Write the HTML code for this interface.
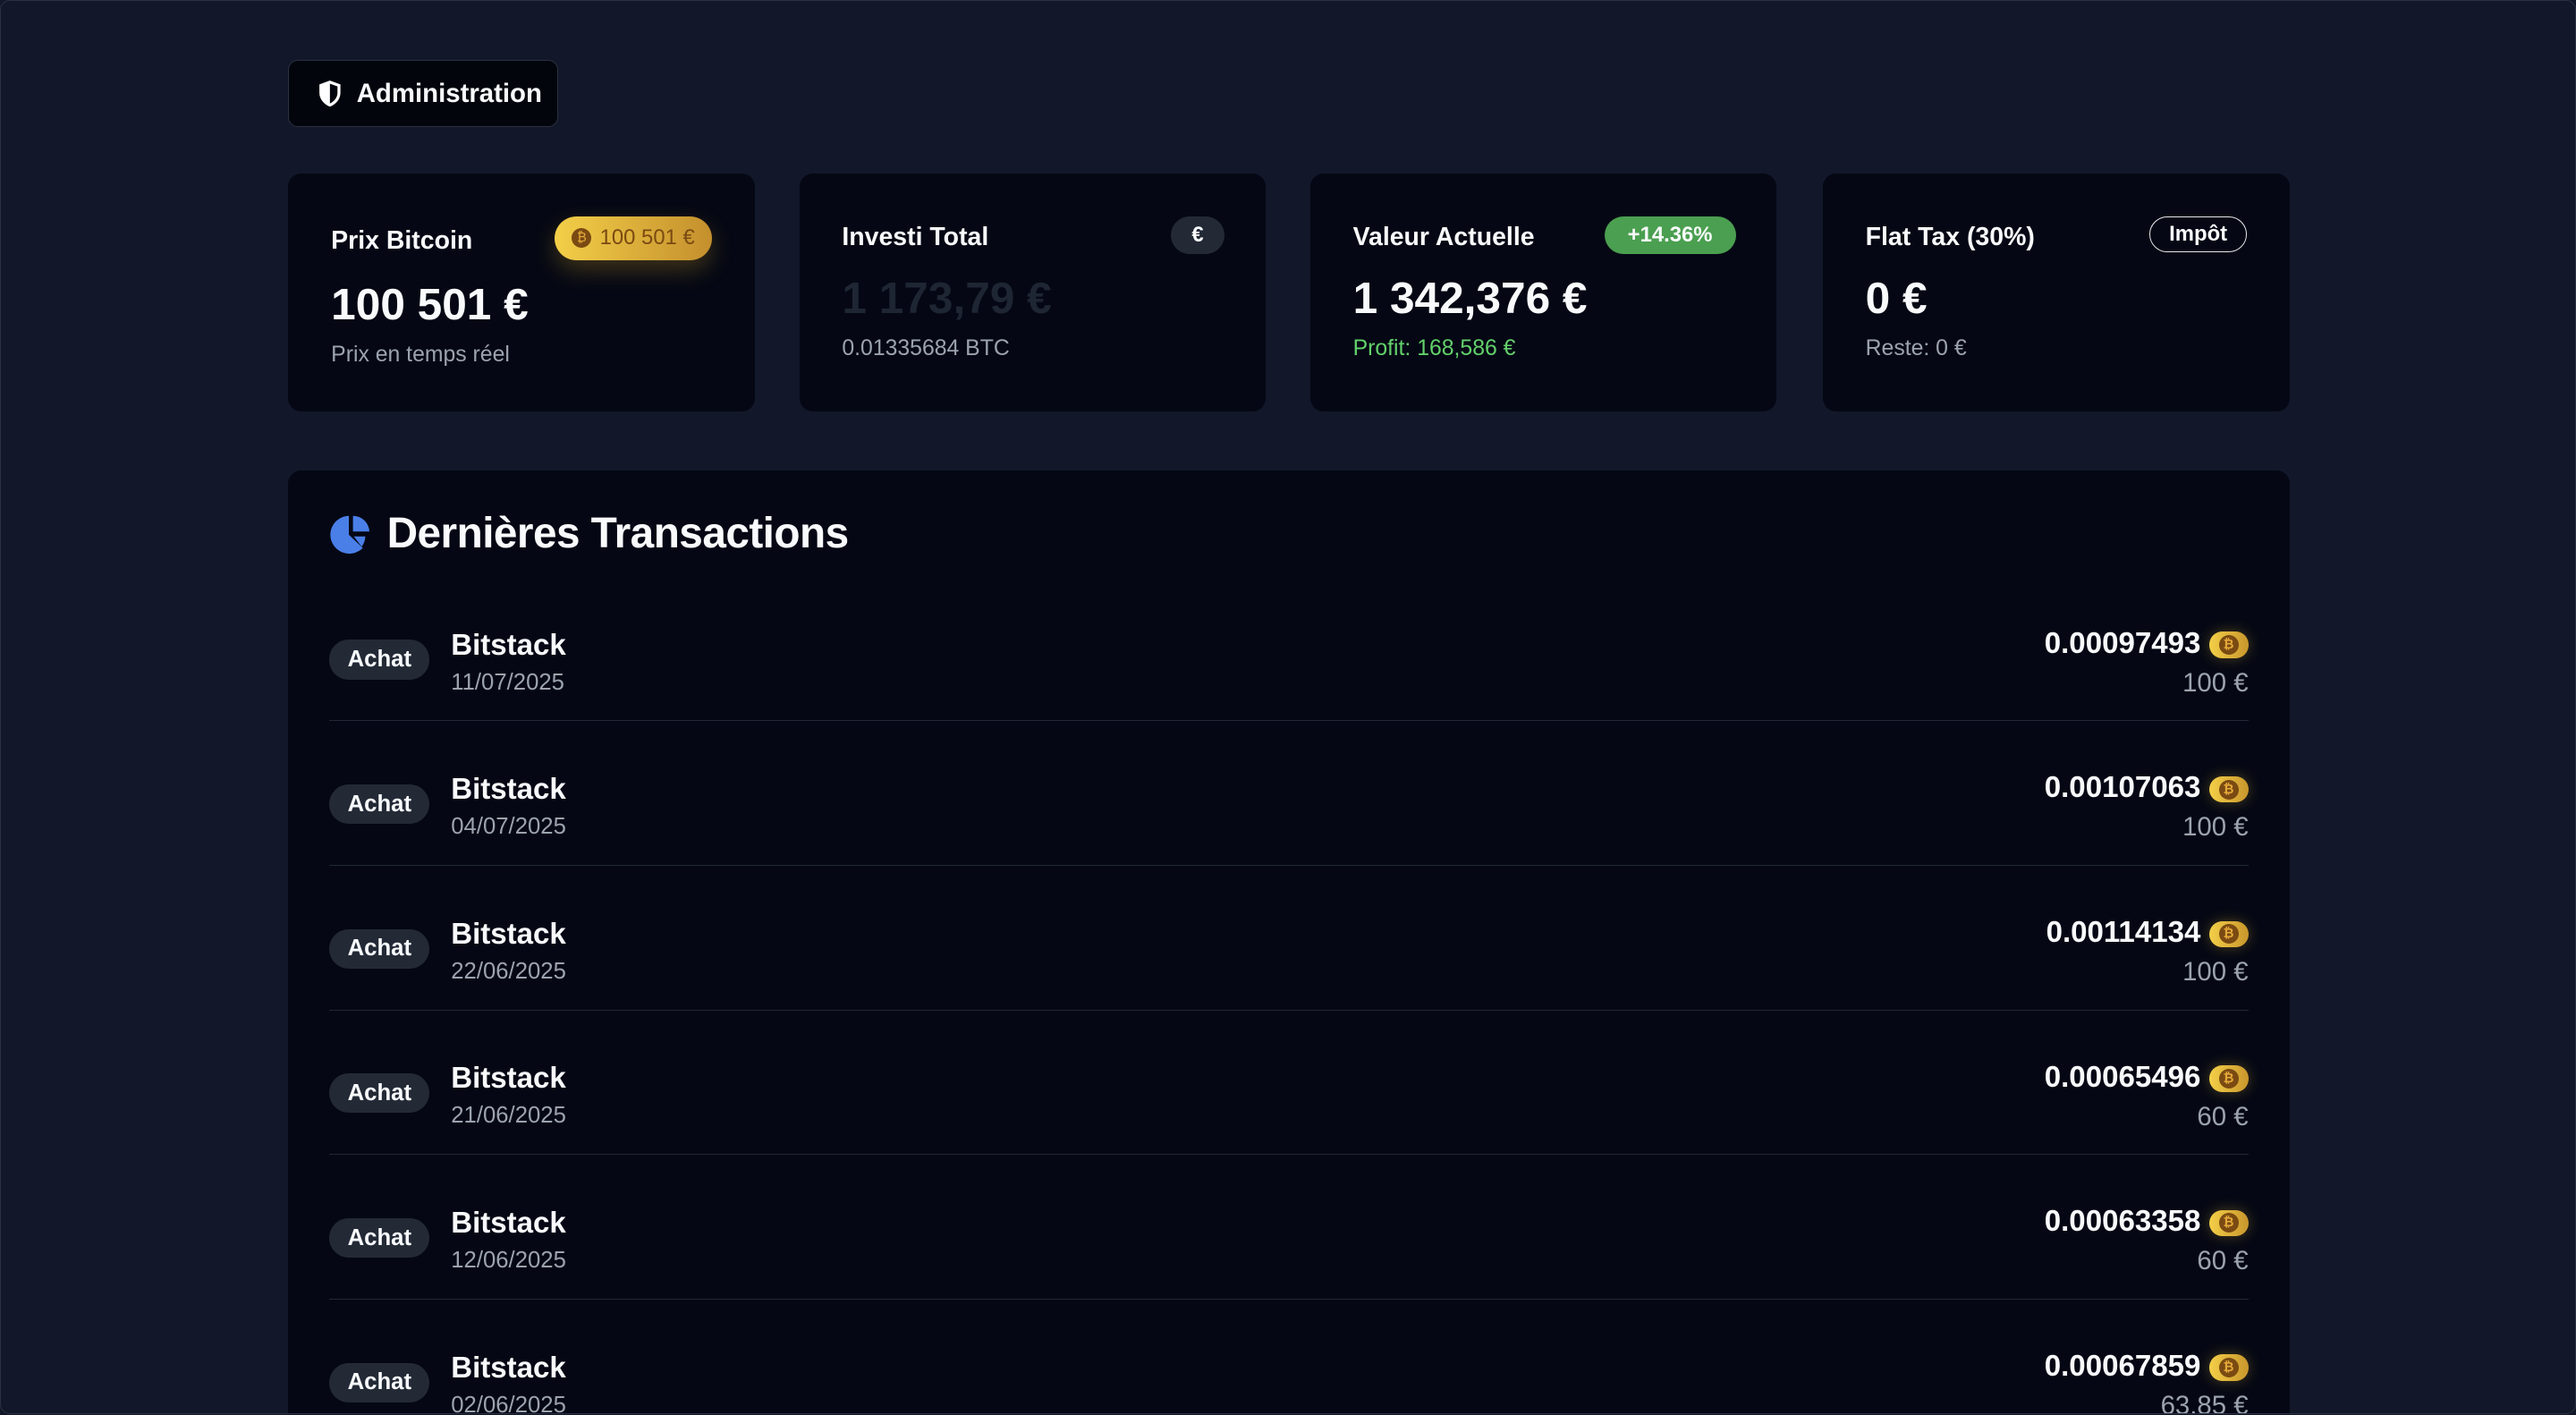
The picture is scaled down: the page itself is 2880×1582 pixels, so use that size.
<!DOCTYPE html>
<html><head><meta charset="utf-8"><style>
html,body{margin:0;padding:0;background:#111827;overflow:hidden}
body{width:2880px;height:1582px}
#w{zoom:1.8367;width:1568px;height:861px;position:relative;font-family:"Liberation Sans",sans-serif;color:#f8fafc;background:#121829;box-sizing:border-box;border:1px solid #2a3140;border-radius:6px;overflow:hidden}
.abs{position:absolute}
.btn{left:175px;top:36px;width:164px;height:41px;box-sizing:border-box;background:#03050d;border:1px solid #2a3140;border-radius:6px;display:flex;align-items:center;padding-left:18px;font-size:16px;font-weight:600}
.card{top:105px;width:284px;height:145px;background:#050814;border-radius:8px}
.lbl{position:absolute;left:26px;font-size:15.5px;font-weight:600}
.big{position:absolute;left:26px;font-size:27px;font-weight:700}
.sub{position:absolute;left:26px;font-size:13.5px;color:#9ca3af}
.pill{position:absolute;border-radius:12px;font-size:13px;font-weight:700;display:flex;align-items:center;justify-content:center}
.panel{left:175px;top:286px;width:1218px;height:600px;background:#050814;border-radius:8px}
.row{position:absolute;left:25px;width:1168px;height:88px;border-bottom:1px solid #222836}
.achat{position:absolute;left:0;top:39px;width:61px;height:24px;border-radius:12px;background:#232a36;font-size:14px;font-weight:700;display:flex;align-items:center;justify-content:center}
.nm{position:absolute;left:74px;top:32px;font-size:18px;font-weight:600}
.dt{position:absolute;left:74px;top:57px;font-size:14px;color:#9ca3af}
.amt{position:absolute;right:29px;top:31px;font-size:18px;font-weight:600}
.eur{position:absolute;right:0;top:56px;font-size:16px;color:#9ca3af}
.coin{position:absolute;right:0;top:34px;width:24px;height:16px;border-radius:8px;background:linear-gradient(90deg,#f3cf48,#c9962c);box-shadow:0 0 8px rgba(240,190,60,.3)}
.coin i{position:absolute;left:6px;top:2px;width:12px;height:12px;border-radius:50%;background:#7a4a12;color:#e5a93a;font-size:8px;font-style:normal;font-weight:700;text-align:center;line-height:12px}
</style></head><body><div id="w">
<div class="abs btn"><svg width="14" height="16" viewBox="0 0 14 16" style="margin-right:9px"><path d="M7 1L1.5 3v4.5C1.5 11 4 13.6 7 15c3-1.4 5.5-4 5.5-7.5V3z" fill="none" stroke="#fff" stroke-width="1.8"/><path d="M7 1v14C4 13.6 1.5 11 1.5 7.5V3z" fill="#fff"/></svg>Administration</div>

<div class="abs card" style="left:175px">
<div class="lbl" style="top:32px">Prix Bitcoin</div>
<div class="pill" style="left:162px;top:26px;width:96px;height:27px;border-radius:14px;background:linear-gradient(90deg,#f3cf48,#c48f2d);color:#7a4a12;font-weight:500;box-shadow:0 6px 14px rgba(230,180,40,.25)"><span style="display:inline-block;width:12px;height:12px;border-radius:50%;background:#7a4a12;color:#e5a93a;font-size:8px;text-align:center;line-height:12px;margin-right:5px">₿</span>100 501 €</div>
<div class="big" style="top:64px">100 501 €</div>
<div class="sub" style="top:103px">Prix en temps réel</div></div>

<div class="abs card" style="left:486px">
<div class="lbl" style="top:30px">Investi Total</div>
<div class="pill" style="left:226px;top:26px;width:33px;height:23px;background:#232a36">€</div>
<div class="big" style="top:60px;color:#1e2533">1 173,79 €</div>
<div class="sub" style="top:99px">0.01335684 BTC</div></div>

<div class="abs card" style="left:797px">
<div class="lbl" style="top:30px">Valeur Actuelle</div>
<div class="pill" style="left:179px;top:26px;width:80px;height:23px;background:#4b9f50">+14.36%</div>
<div class="big" style="top:60px">1 342,376 €</div>
<div class="sub" style="top:99px;color:#63d16b">Profit: 168,586 €</div></div>

<div class="abs card" style="left:1109px">
<div class="lbl" style="top:30px">Flat Tax (30%)</div>
<div class="pill" style="left:199px;top:26px;width:58px;height:21px;border:1px solid #e5e7eb">Impôt</div>
<div class="big" style="top:60px">0 €</div>
<div class="sub" style="top:99px">Reste: 0 €</div></div>

<div class="abs panel">
<svg class="abs" style="left:25px;top:26px" width="26" height="26" viewBox="0 0 26 26"><path d="M12 1.5A11.5 11.5 0 1 0 20.5 21L12 13z" fill="#4a7fe8"/><path d="M14.5 1.5V11h10A10 10 0 0 0 14.5 1.5z" fill="#4a7fe8"/><path d="M15 14l7 0A11 11 0 0 1 19.8 20.2z" fill="#4a7fe8"/></svg>
<div class="abs" style="left:60px;top:23px;font-size:26px;font-weight:700;letter-spacing:-.3px">Dernières Transactions</div>

<div class="row" style="top:64px"><div class="achat">Achat</div><div class="nm">Bitstack</div><div class="dt">11/07/2025</div><div class="amt">0.00097493</div><div class="coin"><i>₿</i></div><div class="eur">100 €</div></div>
<div class="row" style="top:152px"><div class="achat">Achat</div><div class="nm">Bitstack</div><div class="dt">04/07/2025</div><div class="amt">0.00107063</div><div class="coin"><i>₿</i></div><div class="eur">100 €</div></div>
<div class="row" style="top:240px"><div class="achat">Achat</div><div class="nm">Bitstack</div><div class="dt">22/06/2025</div><div class="amt">0.00114134</div><div class="coin"><i>₿</i></div><div class="eur">100 €</div></div>
<div class="row" style="top:328px"><div class="achat">Achat</div><div class="nm">Bitstack</div><div class="dt">21/06/2025</div><div class="amt">0.00065496</div><div class="coin"><i>₿</i></div><div class="eur">60 €</div></div>
<div class="row" style="top:416px"><div class="achat">Achat</div><div class="nm">Bitstack</div><div class="dt">12/06/2025</div><div class="amt">0.00063358</div><div class="coin"><i>₿</i></div><div class="eur">60 €</div></div>
<div class="row" style="top:504px"><div class="achat">Achat</div><div class="nm">Bitstack</div><div class="dt">02/06/2025</div><div class="amt">0.00067859</div><div class="coin"><i>₿</i></div><div class="eur">63,85 €</div></div>
</div>
</div></body></html>
